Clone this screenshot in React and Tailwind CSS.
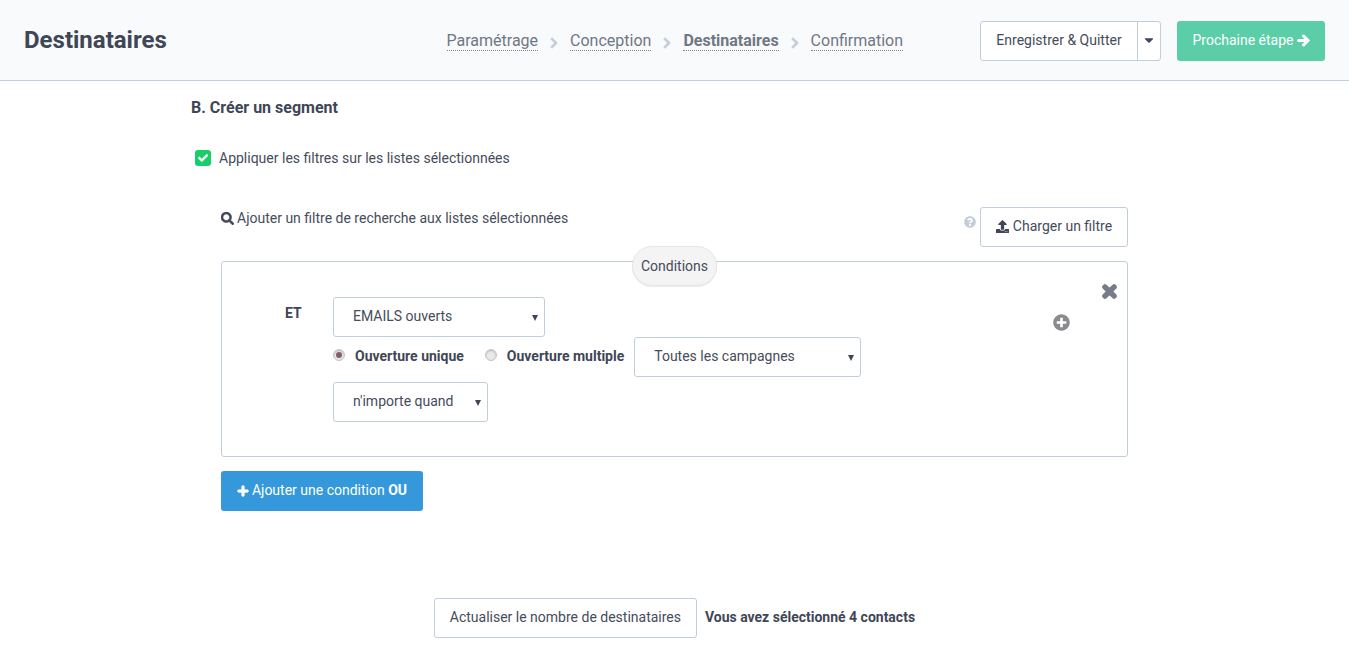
import React from "react";
import { FaCheck, FaSearch, FaQuestionCircle, FaUpload, FaTimes, FaPlusCircle, FaPlus, FaArrowRight, FaCaretDown, FaChevronRight } from "react-icons/fa";

function Step({ children, active }) {
  return (
    <span className={"border-b border-dotted border-[#7a8494] text-[16px] leading-[19px] text-[#6f7785] " + (active ? "font-bold" : "")}>
      {children}
    </span>
  );
}

function Sep() {
  return <FaChevronRight stroke="currentColor" strokeWidth={40} className="mx-[12px] mt-[3px] w-[8px] text-[12px] text-[#c3ccd9]" />;
}

function Select({ label, w }) {
  return (
    <div className={"relative flex h-[40px] shrink-0 items-center rounded-[3px] border border-[#c0cddd] bg-white pb-[2px] pl-[19px] text-[14px] text-[#454c5a] " + w}>
      {label}
      <span className="absolute right-[6px] top-[17px] h-0 w-0 border-x-[3px] border-t-[6px] border-x-transparent border-t-[#3f4656]" />
    </div>
  );
}

function Radio({ checked }) {
  return (
    <span className="mb-[4px] flex h-[12px] w-[12px] shrink-0 items-center justify-center rounded-full border border-[#c4c4c4] bg-[#e9e9e9] shadow-[inset_0_1px_2px_rgba(0,0,0,0.2)]">
      {checked && <span className="h-[6px] w-[6px] rounded-full bg-[#7d5f6d]" />}
    </span>
  );
}

export default function App() {
  return (
    <div className="min-h-[645px] overflow-hidden bg-white font-['Roboto',sans-serif] text-[14px] text-[#454c5a]">
      <header className="flex h-[81px] items-center border-b border-[#c3cfdd] bg-[#f9fafc] pl-[24px] pr-[24px]">
        <h1 className="w-[422.5px] text-[24px] font-bold leading-none text-[#3f4656]">Destinataires</h1>
        <nav className="mt-[2px] flex w-[533.5px] items-center">
          <Step>Paramétrage</Step>
          <Sep />
          <Step>Conception</Step>
          <Sep />
          <Step active>Destinataires</Step>
          <Sep />
          <Step>Confirmation</Step>
        </nav>
        <div className="mt-[2px] flex h-[40px] w-[181px] items-stretch rounded-[3px] border border-[#c0cddd] bg-white">
          <span className="flex w-[157px] items-center justify-center border-r border-[#c0cddd] pb-[2px] text-[#454c5a]">Enregistrer &amp; Quitter</span>
          <span className="flex flex-1 items-center justify-center pb-[3px] text-[#3f4656]"><FaCaretDown className="text-[14px]" /></span>
        </div>
        <button className="ml-[16px] mt-[2px] flex h-[40px] w-[148px] items-center justify-center gap-[3px] rounded-[3px] bg-[#5bcea7] pb-[2px] text-white">
          Prochaine étape <FaArrowRight stroke="currentColor" strokeWidth={40} className="mt-[1px] text-[13px]" />
        </button>
      </header>

      <main className="mx-auto w-[967px]">
        <h2 className="mt-[18px] text-[16px] font-bold leading-[18px] text-[#3f4656]">B. Créer un segment</h2>

        <label className="mt-[32px] flex h-[18px] items-center pl-[4px]">
          <span className="flex h-[16px] w-[16px] items-center justify-center rounded-[3px] bg-[#17ce69] text-white"><FaCheck stroke="currentColor" strokeWidth={30} className="text-[10px]" /></span>
          <span className="ml-[8px]">Appliquer les filtres sur les listes sélectionnées</span>
        </label>

        <section className="mt-[40px] px-[30px]">
          <div className="flex items-start">
            <p className="flex flex-1 items-center gap-[3px] pt-[2px] leading-[18px]"><FaSearch stroke="currentColor" strokeWidth={20} className="text-[13px] text-[#3f4656]" /> Ajouter un filtre de recherche aux listes sélectionnées</p>
            <FaQuestionCircle className="mr-[4px] mt-[9px] text-[12px] text-[#c3ccd9]" />
            <button className="flex h-[40px] w-[148px] items-center justify-center gap-[4px] rounded-[3px] border border-[#c0cddd] bg-white pb-[2px] text-[#454c5a]">
              <FaUpload className="mt-[1px] text-[13px] text-[#3f4656]" /> Charger un filtre
            </button>
          </div>

          <div className="relative mt-[14px] h-[196px] rounded-[3px] border border-[#c0cddd] pl-[63px] pt-[35px]">
            <span className="absolute left-[410px] top-[-16px] flex h-[40px] w-[85px] items-center justify-center rounded-[20px] border border-[#e6e6e6] bg-[#f4f4f4] text-[#454c5a] shadow-[0_1px_1px_rgba(0,0,0,0.08)]">Conditions</span>
            <FaTimes stroke="currentColor" strokeWidth={50} className="absolute right-[8px] top-[20px] text-[19px] text-[#777c88]" />
            <FaPlusCircle className="absolute right-[57px] top-[52px] text-[17px] text-[#8b8b8f]" />
            <div className="flex">
              <span className="w-[48px] pt-[8px] font-bold leading-[16px] text-[#3f4656]">ET</span>
              <div>
                <Select label="EMAILS ouverts" w="w-[212px]" />
                <div className="flex h-[40px] items-center">
                  <Radio checked />
                  <span className="ml-[10px] pb-[2px] font-bold text-[#3f4656]">Ouverture unique</span>
                  <span className="ml-[21px] flex"><Radio /></span>
                  <span className="ml-[10px] pb-[2px] font-bold text-[#3f4656]">Ouverture multiple</span>
                  <span className="ml-[10px]"><Select label="Toutes les campagnes" w="w-[227px]" /></span>
                </div>
                <div className="mt-[5px]"><Select label="n'importe quand" w="w-[155px]" /></div>
              </div>
            </div>
          </div>

          <button className="mt-[14px] flex h-[40px] w-[202px] items-center justify-center gap-[3px] rounded-[3px] bg-[#3498db] pb-[2px] text-white">
            <FaPlus stroke="currentColor" strokeWidth={40} className="mt-[1px] text-[12px]" /> <span>Ajouter une condition <b>OU</b></span>
          </button>
        </section>

        <div className="mt-[87px] flex items-center justify-center">
          <button className="flex h-[40px] w-[263px] items-center justify-center rounded-[3px] border border-[#c0cddd] bg-white pb-[2px] text-[#454c5a]">Actualiser le nombre de destinataires</button>
          <span className="ml-[8px] pb-[2px] font-bold text-[#3f4656]">Vous avez sélectionné 4 contacts</span>
        </div>
      </main>
    </div>
  );
}
